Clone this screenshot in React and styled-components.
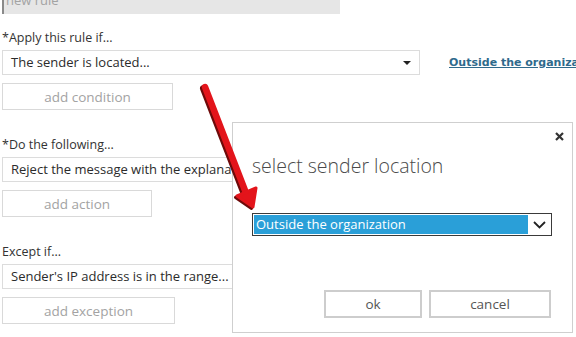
import styled, { createGlobalStyle } from "styled-components";

const GlobalStyle = createGlobalStyle`
  body {
    margin: 0;
    background: #ffffff;
    font-family: "Segoe UI", "Open Sans", "Noto Sans", sans-serif;
  }
`;

const Page = styled.div`
  position: relative;
  width: 576px;
  height: 337px;
  overflow: hidden;
  padding-left: 2px;
  box-sizing: border-box;
  background: #fff;
`;

const NameBar = styled.div`
  width: 338px;
  height: 22px;
  margin-top: -8px;
  background: #e6e6e6;
  color: #a3a3a3;
  font-size: 13px;
  line-height: 17px;
  padding-left: 2px;
  box-sizing: border-box;
  border-left: 2px solid #8a8a8a;
`;

const Section = styled.section`
  display: flex;
  flex-direction: column;
  align-items: flex-start;
  margin-top: ${(p) => p.$top}px;
`;

const Label = styled.div`
  font-size: 12.5px;
  line-height: 18px;
  color: #333;
  white-space: nowrap;
`;

const Row = styled.div`
  display: flex;
  align-items: center;
  gap: 29px;
  margin-top: 3px;
  white-space: nowrap;
`;

const Select = styled.div`
  position: relative;
  width: 418px;
  height: 25px;
  border: 1px solid #dcdcdc;
  box-sizing: border-box;
  padding-left: 8px;
  font-size: 13px;
  line-height: 23px;
  color: #2b2b2b;
  background: #fff;
  display: flex;
  align-items: center;
  justify-content: space-between;
  padding-right: 8px;
`;

const Caret = styled.span`
  width: 0;
  height: 0;
  border-left: 4px solid transparent;
  border-right: 4px solid transparent;
  border-top: 4px solid #222;
`;

const Link = styled.a`
  font-family: "DejaVu Sans", Verdana, sans-serif;
  font-weight: bold;
  font-size: 11px;
  color: #2f6a8c;
  text-decoration: underline;
`;

const AddButton = styled.div`
  width: ${(p) => p.$w}px;
  height: 27px;
  margin-top: 8px;
  border: 1px solid #d9d9d9;
  box-sizing: border-box;
  color: #a3a3a3;
  font-size: 13.5px;
  display: flex;
  align-items: center;
  justify-content: center;
  background: #fff;
`;

const Dialog = styled.div`
  position: absolute;
  left: 232px;
  top: 122px;
  width: 341px;
  height: 211px;
  box-sizing: border-box;
  background: #fff;
  border: 1px solid #cfcfcf;
  display: flex;
  flex-direction: column;
  padding: 0 19px 14px 19px;
`;

const DialogHeader = styled.div`
  height: 26px;
  display: flex;
  align-items: center;
  justify-content: flex-end;
  margin-right: -11px;
`;

const Title = styled.h2`
  margin: 3px 0 0 0;
  font-size: 19.5px;
  font-weight: 300;
  line-height: 27px;
  color: #4a4a4a;
  white-space: nowrap;
`;

const LocationSelect = styled.div`
  margin-top: 34px;
  width: 300px;
  height: 23px;
  border: 1px solid #3a3a3a;
  box-sizing: border-box;
  padding: 1px;
  display: flex;
  align-items: stretch;
  background: #fff;
`;

const Highlight = styled.div`
  flex: 1;
  background: #2a9fd8;
  color: #fff;
  font-size: 13px;
  line-height: 19px;
  padding-left: 2px;
`;

const Chevron = styled.div`
  width: 22px;
  display: flex;
  align-items: center;
  justify-content: center;
`;

const ButtonRow = styled.div`
  margin-top: auto;
  display: flex;
  justify-content: flex-end;
  gap: 7px;
  margin-right: 2px;
`;

const DialogButton = styled.button`
  width: ${(p) => p.$w}px;
  height: 28px;
  border: 2px solid #cdcdcd;
  background: #fff;
  font-family: inherit;
  font-size: 13.5px;
  color: #555;
  padding: 0;
`;

const ArrowLayer = styled.svg`
  position: absolute;
  left: 0;
  top: 0;
  pointer-events: none;
`;

function RedArrow() {
  const shaft = "M205 87 L246 193";
  const head = "253,207 256,188 237,196";
  return (
    <ArrowLayer width="576" height="337">
      <g transform="translate(-1.5 1.5)">
        <path d={shaft} stroke="#6e0a0a" strokeWidth="7" strokeLinecap="round" />
        <polygon points={head} fill="#6e0a0a" stroke="#6e0a0a" strokeWidth="3" strokeLinejoin="round" />
      </g>
      <path d={shaft} stroke="#e3141b" strokeWidth="6.5" strokeLinecap="round" />
      <polygon points={head} fill="#e3141b" stroke="#e3141b" strokeWidth="3" strokeLinejoin="round" />
    </ArrowLayer>
  );
}

export default function App() {
  return (
    <>
      <GlobalStyle />
      <Page>
        <NameBar>new rule</NameBar>

        <Section $top={15}>
          <Label>*Apply this rule if...</Label>
          <Row>
            <Select>
              The sender is located...
              <Caret />
            </Select>
            <Link>Outside the organization</Link>
          </Row>
          <AddButton $w={171}>add condition</AddButton>
        </Section>

        <Section $top={26}>
          <Label>*Do the following...</Label>
          <Row>
            <Select>Reject the message with the explanation</Select>
          </Row>
          <AddButton $w={150}>add action</AddButton>
        </Section>

        <Section $top={26}>
          <Label>Except if...</Label>
          <Row>
            <Select>Sender's IP address is in the range...</Select>
          </Row>
          <AddButton $w={173}>add exception</AddButton>
        </Section>

        <Dialog>
          <DialogHeader>
            <svg width="9" height="9" viewBox="0 0 9 9">
              <path d="M1 1 L8 8 M8 1 L1 8" stroke="#333" strokeWidth="2.2" />
            </svg>
          </DialogHeader>
          <Title>select sender location</Title>
          <LocationSelect>
            <Highlight>Outside the organization</Highlight>
            <Chevron>
              <svg width="13" height="8" viewBox="0 0 13 8">
                <path d="M1 1 L6.5 6.5 L12 1" stroke="#222" strokeWidth="1.8" fill="none" />
              </svg>
            </Chevron>
          </LocationSelect>
          <ButtonRow>
            <DialogButton $w={98}>ok</DialogButton>
            <DialogButton $w={122}>cancel</DialogButton>
          </ButtonRow>
        </Dialog>

        <RedArrow />
      </Page>
    </>
  );
}
